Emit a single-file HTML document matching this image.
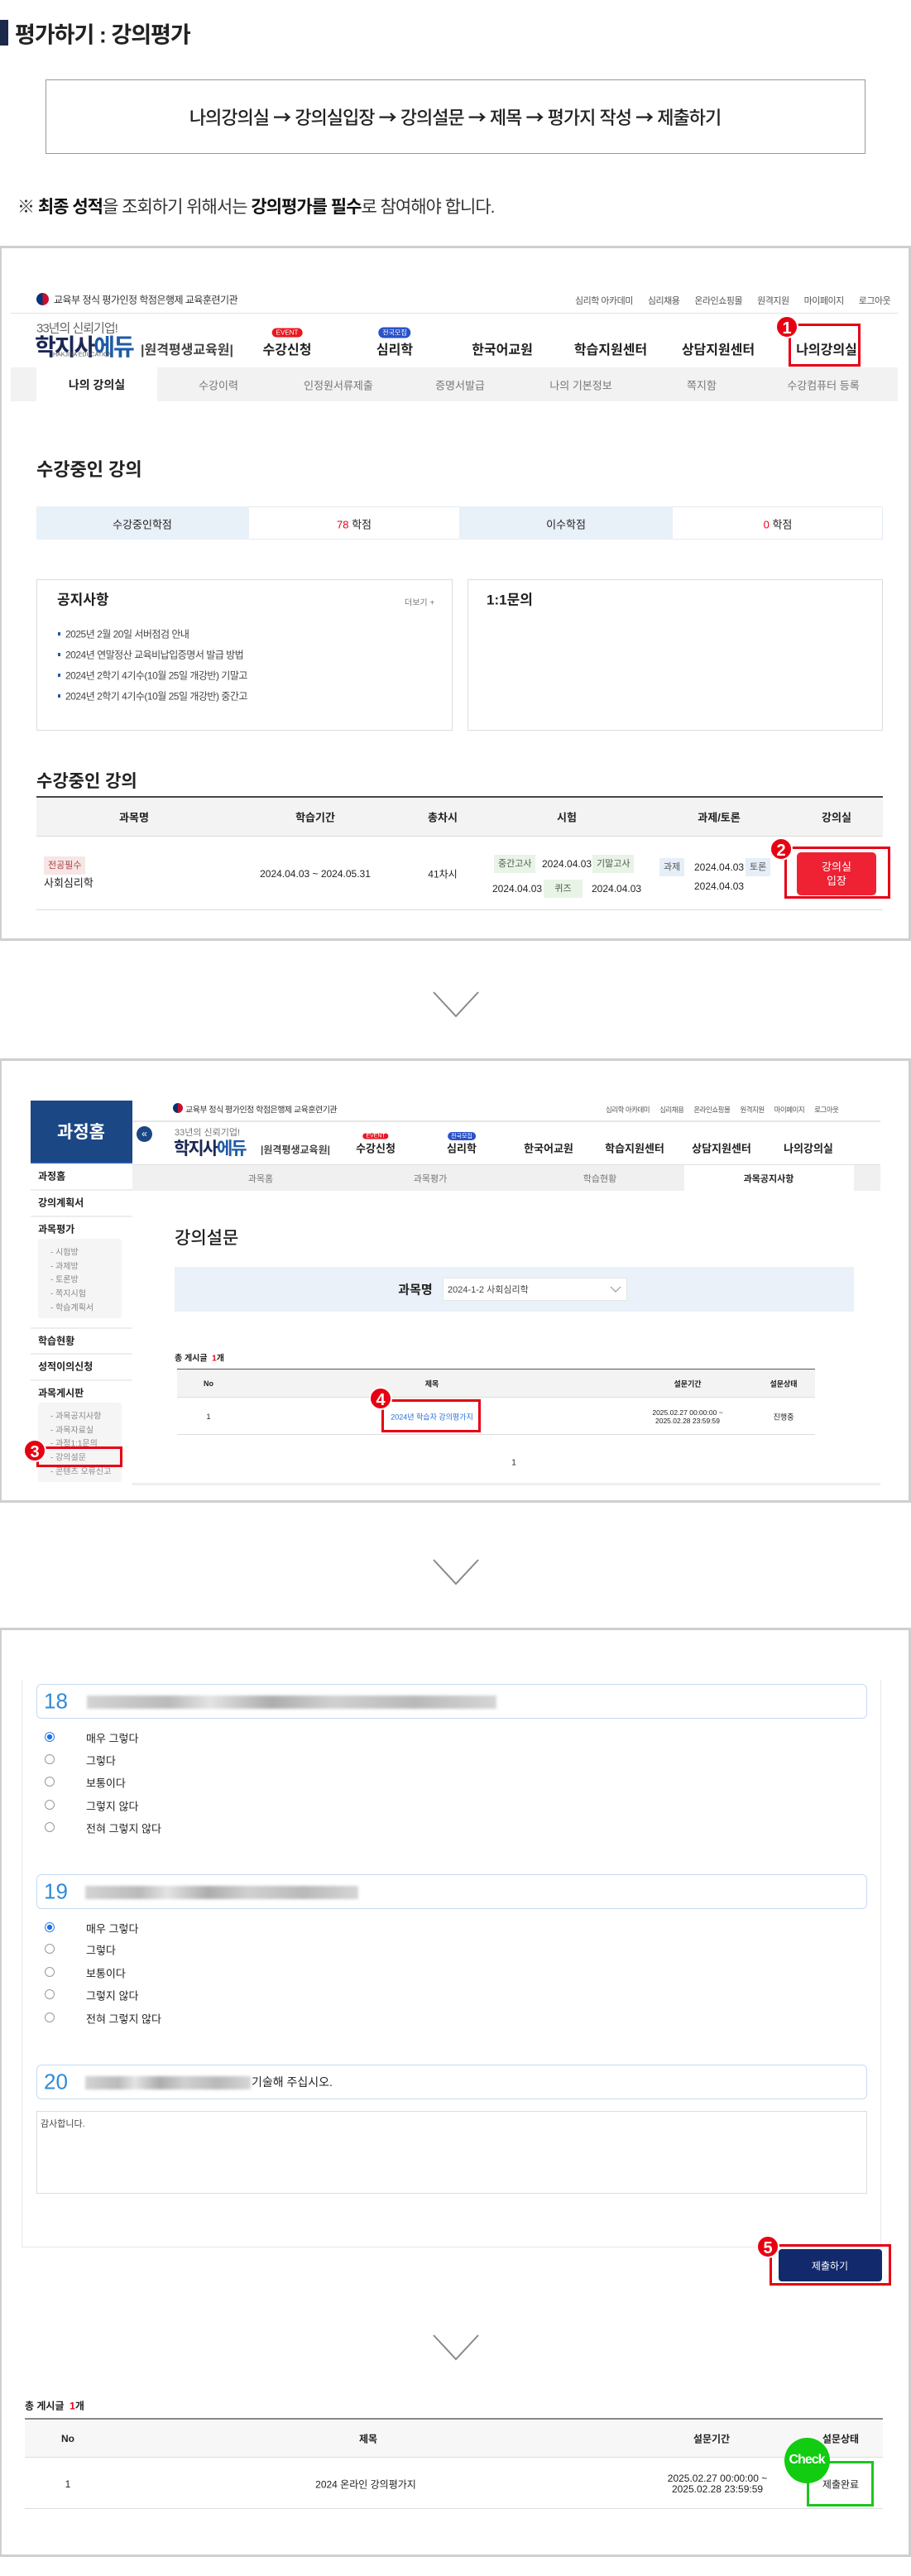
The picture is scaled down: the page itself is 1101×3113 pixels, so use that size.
<!DOCTYPE html>
<html><head><meta charset="utf-8"><style>
*{margin:0;padding:0;box-sizing:border-box}
body{width:1101px;height:3113px;position:relative;background:#fff;font-family:"Liberation Sans","Noto Sans CJK KR",sans-serif;color:#222;overflow:hidden}
div,span{position:absolute}
.c{transform:translate(-50%,-50%);white-space:nowrap}
.l{transform:translateY(-50%);white-space:nowrap}
.b{font-weight:bold}
.panel{left:0;width:1101px;border:3px solid #cfcfcf;border-left:2px solid #cfcfcf}
.badge{width:28px;height:28px;border-radius:50%;background:#e60012;color:#fff;font-weight:bold;font-size:20px;line-height:28px;text-align:center;transform:translate(-50%,-50%);border:2px solid #fff}
.rbox{border:3px solid #e60012}
.tag{font-size:11px;padding:0 5px;height:22px;line-height:22px}
.hl{height:1px;background:#ddd}
.radio{width:12px;height:12px;border:1px solid #999;border-radius:50%;transform:translate(-50%,-50%)}
.radio.on{border:1px solid #3b7de0;background:radial-gradient(circle,#1a73e8 40%,#fff 48%)}
.qbox{left:44px;width:1004px;height:42px;border:1.5px solid #c5daf5;border-radius:6px}
.qn{color:#2e8bd8;font-size:26px;left:8px;top:50%;transform:translateY(-50%)}
.blur{height:16px;top:13px;background:linear-gradient(90deg,#c9c9c9,#aaa 20%,#ddd 30%,#999 45%,#c5c5c5 60%,#a8a8a8 80%,#ccc);filter:blur(1.5px);opacity:.8}
.ar{position:static;font-family:"Noto Sans CJK KR",sans-serif;font-weight:bold}
.ul{display:flex;gap:var(--g);transform:translateY(-50%);white-space:nowrap;color:#555;letter-spacing:-.5px}
.ul span{position:static}
</style></head><body>

<div style="left:0;top:24px;width:10px;height:31px;background:#1b2a4a"></div>
<div class="l" style="left:18px;top:40px;font-size:27px;font-weight:bold;letter-spacing:-1px">평가하기 : 강의평가</div>

<div style="left:55px;top:96px;width:991px;height:90px;border:1.5px solid #999"></div>
<div class="c" style="left:550px;top:141px;font-size:22px;font-weight:500;letter-spacing:-1px">나의강의실 <span class="ar">→</span> 강의실입장 <span class="ar">→</span> 강의설문 <span class="ar">→</span> 제목 <span class="ar">→</span> 평가지 작성 <span class="ar">→</span> 제출하기</div>

<div class="l" style="left:21px;top:249px;font-size:21px;letter-spacing:-1px;color:#333">※ <b style="color:#111">최종 성적</b>을 조회하기 위해서는 <b style="color:#111">강의평가를 필수</b>로 참여해야 합니다.</div>

<!-- PANEL 1 -->
<div class="panel" style="top:297px;height:840px"></div>
<div style="left:44px;top:354px;width:15px;height:15px;border-radius:50%;background:conic-gradient(#c8102e 0 50%,#003478 50% 100%)"></div>
<div class="l" style="left:65px;top:362px;font-size:12px;color:#333;letter-spacing:-.5px">교육부 정식 평가인정 학점은행제 교육훈련기관</div>
<div class="ul" style="left:695px;top:363px;font-size:11px;--g:18px"><span>심리학 아카데미</span><span>심리채용</span><span>온라인쇼핑몰</span><span>원격지원</span><span>마이페이지</span><span>로그아웃</span></div>
<div class="hl" style="left:13px;top:378px;width:1072px;background:#e3e3e3"></div>
<div class="l" style="left:44px;top:396px;font-size:15px;color:#666;letter-spacing:-1px">33년의 신뢰기업!</div>
<div class="l b" style="left:42px;top:418px;font-size:28px;color:#1c2754;letter-spacing:-2px">학지사<span style="position:static;color:#1e5aa8">에듀</span></div>
<div class="l" style="left:64px;top:429px;font-size:7px;color:#555">HAKJISA EDUCATION</div>
<div class="l" style="left:170px;top:421px;font-size:16px;color:#444;font-weight:bold">|원격평생교육원|</div>
<div class="c" style="left:347px;top:402px;background:#e8161e;color:#fff;font-size:8px;padding:1px 5px;border-radius:7px">EVENT</div>
<div class="c b" style="left:347px;top:421px;font-size:16px">수강신청</div>
<div class="c" style="left:477px;top:402px;background:#2a52c9;color:#fff;font-size:8px;padding:1px 5px;border-radius:7px">전국모집</div>
<div class="c b" style="left:477px;top:421px;font-size:16px">심리학</div>
<div class="c b" style="left:607px;top:421px;font-size:16px">한국어교원</div>
<div class="c b" style="left:738px;top:421px;font-size:16px">학습지원센터</div>
<div class="c b" style="left:868px;top:421px;font-size:16px">상담지원센터</div>
<div class="c b" style="left:999px;top:421px;font-size:16px">나의강의실</div>
<div class="rbox" style="left:953px;top:391px;width:87px;height:52px"></div>
<div class="badge" style="left:951px;top:395px">1</div>
<div style="left:13px;top:444px;width:1072px;height:41px;background:#f2f2f2"></div>
<div style="left:44px;top:444px;width:146px;height:41px;background:#fff"></div>
<div class="c b" style="left:117px;top:465px;font-size:14px">나의 강의실</div>
<div class="c" style="left:264px;top:465px;font-size:13px;color:#777">수강이력</div>
<div class="c" style="left:409px;top:465px;font-size:13px;color:#777">인정원서류제출</div>
<div class="c" style="left:556px;top:465px;font-size:13px;color:#777">증명서발급</div>
<div class="c" style="left:702px;top:465px;font-size:13px;color:#777">나의 기본정보</div>
<div class="c" style="left:848px;top:465px;font-size:13px;color:#777">쪽지함</div>
<div class="c" style="left:995px;top:465px;font-size:13px;color:#777">수강컴퓨터 등록</div>

<div class="l b" style="left:44px;top:566px;font-size:22px">수강중인 강의</div>

<div style="left:44px;top:612px;width:1023px;height:40px;border:1px solid #e3ebf3;background:#fff"></div>
<div style="left:44px;top:612px;width:257px;height:40px;background:#e8f0f8"></div>
<div style="left:555px;top:612px;width:258px;height:40px;background:#e8f0f8"></div>
<div class="c" style="left:172px;top:633px;font-size:13px">수강중인학점</div>
<div class="c" style="left:428px;top:633px;font-size:13px"><span style="position:static;color:#e60012">78</span> 학점</div>
<div class="c" style="left:684px;top:633px;font-size:13px">이수학점</div>
<div class="c" style="left:940px;top:633px;font-size:13px"><span style="position:static;color:#e60012">0</span> 학점</div>

<div style="left:44px;top:700px;width:503px;height:183px;border:1.5px solid #ddd"></div>
<div style="left:565px;top:700px;width:502px;height:183px;border:1.5px solid #ddd"></div>
<div class="l b" style="left:69px;top:723px;font-size:17px">공지사항</div>
<div class="l" style="left:489px;top:727px;font-size:10px;color:#777">더보기 +</div>
<div class="l" style="left:588px;top:723px;font-size:17px;font-weight:bold">1:1문의</div>
<div style="left:70px;top:764px;width:3px;height:4px;background:#1e5aa8"></div><div class="l" style="left:79px;top:766px;font-size:12px;color:#444;letter-spacing:-.5px">2025년 2월 20일 서버점검 안내</div>
<div style="left:70px;top:789px;width:3px;height:4px;background:#1e5aa8"></div><div class="l" style="left:79px;top:791px;font-size:12px;color:#444;letter-spacing:-.5px">2024년 연말정산 교육비납입증명서 발급 방법</div>
<div style="left:70px;top:814px;width:3px;height:4px;background:#1e5aa8"></div><div class="l" style="left:79px;top:816px;font-size:12px;color:#444;letter-spacing:-.5px">2024년 2학기 4기수(10월 25일 개강반) 기말고</div>
<div style="left:70px;top:839px;width:3px;height:4px;background:#1e5aa8"></div><div class="l" style="left:79px;top:841px;font-size:12px;color:#444;letter-spacing:-.5px">2024년 2학기 4기수(10월 25일 개강반) 중간고</div>

<div class="l b" style="left:44px;top:943px;font-size:21px">수강중인 강의</div>
<div style="left:44px;top:962px;width:1023px;height:49px;background:#f3f3f3;border-top:2px solid #444;border-bottom:1px solid #ddd"></div>
<div class="c b" style="left:162px;top:987px;font-size:13px">과목명</div>
<div class="c b" style="left:381px;top:987px;font-size:13px">학습기간</div>
<div class="c b" style="left:535px;top:987px;font-size:13px">총차시</div>
<div class="c b" style="left:685px;top:987px;font-size:13px">시험</div>
<div class="c b" style="left:869px;top:987px;font-size:13px">과제/토론</div>
<div class="c b" style="left:1011px;top:987px;font-size:13px">강의실</div>
<div class="hl" style="left:44px;top:1099px;width:1023px"></div>
<div class="tag" style="left:53px;top:1035px;background:#f6e6e6;color:#b04040">전공필수</div>
<div class="l" style="left:53px;top:1066px;font-size:13px">사회심리학</div>
<div class="c" style="left:381px;top:1056px;font-size:12px">2024.04.03 ~ 2024.05.31</div>
<div class="c" style="left:535px;top:1056px;font-size:12px">41차시</div>
<div class="tag" style="left:597px;top:1033px;background:#e8f4e6;color:#555">중간고사</div>
<div class="l" style="left:655px;top:1044px;font-size:12px">2024.04.03</div>
<div class="tag" style="left:716px;top:1033px;background:#e8f4e6;color:#555">기말고사</div>
<div class="l" style="left:595px;top:1074px;font-size:12px">2024.04.03</div>
<div class="tag" style="left:657px;top:1063px;background:#e8f4e6;color:#555;width:47px;text-align:center">퀴즈</div>
<div class="l" style="left:715px;top:1074px;font-size:12px">2024.04.03</div>
<div class="tag" style="left:797px;top:1037px;background:#e6eef8;color:#555">과제</div>
<div class="l" style="left:839px;top:1048px;font-size:12px">2024.04.03</div>
<div class="tag" style="left:901px;top:1037px;background:#e6eef8;color:#555">토론</div>
<div class="l" style="left:839px;top:1071px;font-size:12px">2024.04.03</div>
<div style="left:963px;top:1030px;width:96px;height:52px;background:#ee2233;border-radius:5px"></div>
<div class="c" style="left:1011px;top:1056px;font-size:13px;color:#fff;text-align:center;line-height:17px">강의실<br>입장</div>
<div class="rbox" style="left:948px;top:1023px;width:128px;height:63px"></div>
<div class="badge" style="left:944px;top:1026px">2</div>

<svg style="position:absolute;left:523px;top:1198px" width="56" height="32"><polyline points="1,1 28,30 55,1" fill="none" stroke="#8a8a8a" stroke-width="2"/></svg>

<!-- PANEL 2 -->
<div class="panel" style="top:1279px;height:537px"></div>
<div style="left:37px;top:1330px;width:123px;height:75px;background:#1b4785"></div>
<div class="c b" style="left:98px;top:1367px;font-size:21px;color:#fff">과정홈</div>
<div style="left:37px;top:1404px;width:123px;height:2px;background:#2a5aa0"></div>
<div class="l b" style="left:46px;top:1421px;font-size:12px">과정홈</div>
<div class="hl" style="left:37px;top:1437px;width:123px;height:2px;background:#eee"></div>
<div class="l b" style="left:46px;top:1453px;font-size:12px">강의계획서</div>
<div class="hl" style="left:37px;top:1469px;width:123px;height:2px;background:#eee"></div>
<div class="l b" style="left:46px;top:1485px;font-size:12px">과목평가</div>
<div style="left:46px;top:1497px;width:101px;height:96px;background:#f5f5f5;border-radius:3px"></div>
<div class="l" style="left:61px;top:1512px;font-size:10px;color:#888">- 시험방</div>
<div class="l" style="left:61px;top:1529px;font-size:10px;color:#888">- 과제방</div>
<div class="l" style="left:61px;top:1545px;font-size:10px;color:#888">- 토론방</div>
<div class="l" style="left:61px;top:1562px;font-size:10px;color:#888">- 쪽지시험</div>
<div class="l" style="left:61px;top:1579px;font-size:10px;color:#888">- 학습계획서</div>
<div class="hl" style="left:37px;top:1604px;width:123px;height:2px;background:#eee"></div>
<div class="l b" style="left:46px;top:1620px;font-size:12px">학습현황</div>
<div class="hl" style="left:37px;top:1635px;width:123px;height:2px;background:#eee"></div>
<div class="l b" style="left:46px;top:1651px;font-size:12px">성적이의신청</div>
<div class="hl" style="left:37px;top:1667px;width:123px;height:2px;background:#eee"></div>
<div class="l b" style="left:46px;top:1683px;font-size:12px">과목게시판</div>
<div style="left:46px;top:1695px;width:101px;height:96px;background:#f5f5f5;border-radius:3px"></div>
<div class="l" style="left:61px;top:1710px;font-size:10px;color:#888">- 과목공지사항</div>
<div class="l" style="left:61px;top:1727px;font-size:10px;color:#888">- 과목자료실</div>
<div class="l" style="left:61px;top:1743px;font-size:10px;color:#888">- 과정1:1문의</div>
<div class="l" style="left:61px;top:1760px;font-size:10px;color:#888">- 강의설문</div>
<div class="l" style="left:61px;top:1777px;font-size:10px;color:#888">- 콘텐츠 오류신고</div>
<div class="rbox" style="left:44px;top:1748px;width:104px;height:25px"></div>
<div class="badge" style="left:42px;top:1753px">3</div>

<div style="left:209px;top:1333px;width:12px;height:12px;border-radius:50%;background:conic-gradient(#c8102e 0 50%,#003478 50% 100%)"></div>
<div class="l" style="left:224px;top:1340px;font-size:10px;color:#333;letter-spacing:-.5px">교육부 정식 평가인정 학점은행제 교육훈련기관</div>
<div class="ul" style="left:732px;top:1341px;font-size:8.5px;--g:12px"><span>심리학 아카데미</span><span>심리채용</span><span>온라인쇼핑몰</span><span>원격지원</span><span>마이페이지</span><span>로그아웃</span></div>
<div class="hl" style="left:160px;top:1354px;width:904px;background:#e6e6e6;height:2px"></div>
<div style="left:165px;top:1361px;width:19px;height:19px;border-radius:50%;background:#1b4785;color:#fff;font-size:12px;line-height:18px;text-align:center">«</div>
<div class="l" style="left:211px;top:1368px;font-size:11px;color:#777">33년의 신뢰기업!</div>
<div class="l b" style="left:210px;top:1387px;font-size:21px;color:#1c2754;letter-spacing:-2px">학지사<span style="position:static;color:#1e5aa8">에듀</span></div>
<div class="l" style="left:315px;top:1389px;font-size:12px;color:#444;font-weight:bold">|원격평생교육원|</div>
<div class="c" style="left:454px;top:1373px;background:#e8161e;color:#fff;font-size:7px;padding:0 4px;border-radius:6px">EVENT</div>
<div class="c b" style="left:454px;top:1387px;font-size:13px">수강신청</div>
<div class="c" style="left:558px;top:1373px;background:#2a52c9;color:#fff;font-size:7px;padding:0 4px;border-radius:6px">전국모집</div>
<div class="c b" style="left:558px;top:1387px;font-size:13px">심리학</div>
<div class="c b" style="left:663px;top:1387px;font-size:13px">한국어교원</div>
<div class="c b" style="left:767px;top:1387px;font-size:13px">학습지원센터</div>
<div class="c b" style="left:872px;top:1387px;font-size:13px">상담지원센터</div>
<div class="c b" style="left:977px;top:1387px;font-size:13px">나의강의실</div>
<div style="left:160px;top:1407px;width:904px;height:32px;background:#f0f0f0;border-top:1px solid #e0e0e0"></div>
<div style="left:827px;top:1408px;width:205px;height:31px;background:#fff"></div>
<div class="c" style="left:315px;top:1424px;font-size:11px;color:#777">과목홈</div>
<div class="c" style="left:520px;top:1424px;font-size:11px;color:#777">과목평가</div>
<div class="c" style="left:725px;top:1424px;font-size:11px;color:#777">학습현황</div>
<div class="c b" style="left:929px;top:1424px;font-size:11px">과목공지사항</div>
<div class="l b" style="left:211px;top:1495px;font-size:21px;font-weight:500">강의설문</div>
<div style="left:211px;top:1531px;width:821px;height:54px;background:#eaf1f9"></div>
<div class="c b" style="left:502px;top:1558px;font-size:15px">과목명</div>
<div style="left:535px;top:1544px;width:223px;height:28px;background:#fff;border:1px solid #e6e6e6"></div>
<div class="l" style="left:541px;top:1558px;font-size:11px;color:#444">2024-1-2 사회심리학</div>
<svg style="position:absolute;left:737px;top:1554px" width="14" height="8"><polyline points="1,1 7,7 13,1" fill="none" stroke="#999" stroke-width="1.2"/></svg>
<div class="l b" style="left:211px;top:1640px;font-size:10px">총 게시글 &nbsp;<span style="position:static;color:#e60012">1</span>개</div>
<div style="left:214px;top:1654px;width:771px;height:35px;background:#f3f3f3;border-top:1px solid #555;border-bottom:1px solid #ddd"></div>
<div class="c b" style="left:252px;top:1672px;font-size:9px">No</div>
<div class="c b" style="left:522px;top:1672px;font-size:9px">제목</div>
<div class="c b" style="left:831px;top:1672px;font-size:9px">설문기간</div>
<div class="c b" style="left:947px;top:1672px;font-size:9px">설문상태</div>
<div class="hl" style="left:214px;top:1733px;width:771px"></div>
<div class="c" style="left:252px;top:1712px;font-size:9px">1</div>
<div class="c" style="left:522px;top:1712px;font-size:9px;color:#2a6fd6">2024년 학습자 강의평가지</div>
<div class="c" style="left:831px;top:1712px;font-size:8.5px;text-align:center;line-height:10px">2025.02.27 00:00:00 ~<br>2025.02.28 23:59:59</div>
<div class="c" style="left:947px;top:1712px;font-size:9px">진행중</div>
<div class="rbox" style="left:461px;top:1691px;width:120px;height:40px"></div>
<div class="badge" style="left:460px;top:1690px">4</div>
<div class="c" style="left:621px;top:1768px;font-size:10px">1</div>
<div style="left:160px;top:1792px;width:904px;height:3px;background:#eee"></div>

<svg style="position:absolute;left:523px;top:1884px" width="56" height="32"><polyline points="1,1 28,30 55,1" fill="none" stroke="#8a8a8a" stroke-width="2"/></svg>

<!-- PANEL 3 -->
<div class="panel" style="top:1967px;height:1123px"></div>
<div style="left:26px;top:2030px;width:1039px;height:686px;border:1px solid #e8e8e8;border-top:none"></div>

<div class="qbox" style="top:2035px"><span class="qn">18</span><span class="blur" style="left:60px;width:495px"></span></div>
<div class="radio on" style="left:60px;top:2099px"></div><div class="l" style="left:104px;top:2100px;font-size:13px">매우 그렇다</div>
<div class="radio" style="left:60px;top:2126px"></div><div class="l" style="left:104px;top:2127px;font-size:13px">그렇다</div>
<div class="radio" style="left:60px;top:2153px"></div><div class="l" style="left:104px;top:2154px;font-size:13px">보통이다</div>
<div class="radio" style="left:60px;top:2181px"></div><div class="l" style="left:104px;top:2182px;font-size:13px">그렇지 않다</div>
<div class="radio" style="left:60px;top:2208px"></div><div class="l" style="left:104px;top:2209px;font-size:13px">전혀 그렇지 않다</div>

<div class="qbox" style="top:2265px"><span class="qn">19</span><span class="blur" style="left:58px;width:330px"></span></div>
<div class="radio on" style="left:60px;top:2329px"></div><div class="l" style="left:104px;top:2330px;font-size:13px">매우 그렇다</div>
<div class="radio" style="left:60px;top:2355px"></div><div class="l" style="left:104px;top:2356px;font-size:13px">그렇다</div>
<div class="radio" style="left:60px;top:2383px"></div><div class="l" style="left:104px;top:2384px;font-size:13px">보통이다</div>
<div class="radio" style="left:60px;top:2410px"></div><div class="l" style="left:104px;top:2411px;font-size:13px">그렇지 않다</div>
<div class="radio" style="left:60px;top:2438px"></div><div class="l" style="left:104px;top:2439px;font-size:13px">전혀 그렇지 않다</div>

<div class="qbox" style="top:2495px"><span class="qn">20</span><span class="blur" style="left:58px;width:200px"></span><span class="l" style="left:259px;top:50%;font-size:14px">기술해 주십시오.</span></div>
<div style="left:44px;top:2551px;width:1004px;height:100px;border:1.5px solid #ddd"></div>
<div class="l" style="left:49px;top:2566px;font-size:11px;color:#444">감사합니다.</div>

<div style="left:941px;top:2718px;width:125px;height:39px;background:#12296b;border-radius:4px"></div>
<div class="c" style="left:1003px;top:2738px;font-size:12px;color:#fff">제출하기</div>
<div class="rbox" style="left:930px;top:2712px;width:147px;height:50px"></div>
<div class="badge" style="left:928px;top:2715px">5</div>

<svg style="position:absolute;left:523px;top:2821px" width="56" height="32"><polyline points="1,1 28,30 55,1" fill="none" stroke="#8a8a8a" stroke-width="2"/></svg>

<div class="l b" style="left:30px;top:2907px;font-size:12px">총 게시글 &nbsp;<span style="position:static;color:#e60012">1</span>개</div>
<div style="left:30px;top:2922px;width:1037px;height:48px;background:#f7f7f7;border-top:2px solid #888;border-bottom:1px solid #ddd"></div>
<div class="c b" style="left:82px;top:2947px;font-size:12px">No</div>
<div class="c b" style="left:445px;top:2947px;font-size:12px">제목</div>
<div class="c b" style="left:860px;top:2947px;font-size:12px">설문기간</div>
<div class="c b" style="left:1016px;top:2947px;font-size:12px">설문상태</div>
<div class="hl" style="left:30px;top:3031px;width:1037px"></div>
<div class="c" style="left:82px;top:3002px;font-size:12px">1</div>
<div class="c" style="left:442px;top:3002px;font-size:12px">2024 온라인 강의평가지</div>
<div class="c" style="left:867px;top:3002px;font-size:12px;text-align:center;line-height:13px">2025.02.27 00:00:00 ~<br>2025.02.28 23:59:59</div>
<div class="c" style="left:1016px;top:3002px;font-size:12px">제출완료</div>
<div style="left:975px;top:2974px;width:81px;height:55px;border:3px solid #1ec41e"></div>
<div style="left:948px;top:2946px;width:55px;height:55px;border-radius:50%;background:#11cc11"></div>
<div class="c b" style="left:975px;top:2973px;font-size:16px;color:#fff;letter-spacing:-1px">Check</div>

</body></html>
